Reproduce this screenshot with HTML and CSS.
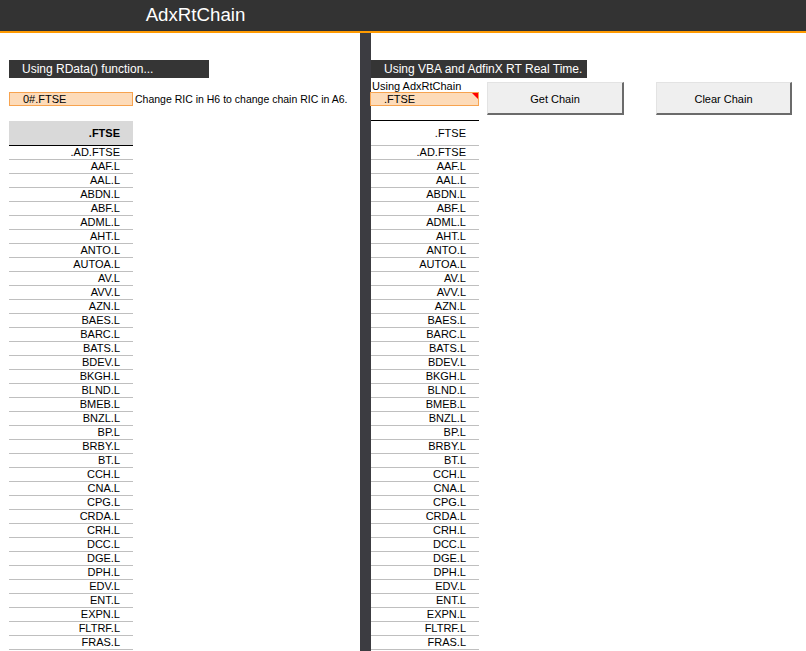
FILE: index.html
```html
<!DOCTYPE html>
<html>
<head>
<meta charset="utf-8">
<link rel="stylesheet" href="styles.css">
</head>
<body>
<div class="topbar"><div class="title">AdxRtChain</div></div>
<div class="main">
  <div class="leftcol">
    <div class="section section-left">Using RData() function...</div>
    <div class="inputrow">
      <div class="cellinput cellinput-left">0#.FTSE</div>
      <div class="note">Change RIC in H6 to change chain RIC in A6.</div>
    </div>
    <div class="table table-left">
      <div class="thead thead-left">.FTSE</div>
      <div class="rows" id="rowsL"></div>
    </div>
  </div>
  <div class="divider"></div>
  <div class="rightcol">
    <div class="section section-right">Using VBA and AdfinX RT Real Time.</div>
    <div class="controls">
      <div class="stack">
        <div class="label">Using AdxRtChain</div>
        <div class="cellinput cellinput-right">.FTSE<span class="flag"></span></div>
      </div>
      <div class="btn btn-get">Get Chain</div>
      <div class="btn btn-clear">Clear Chain</div>
    </div>
    <div class="table table-right">
      <div class="thead thead-right">.FTSE</div>
      <div class="rows" id="rowsR"></div>
    </div>
  </div>
</div>
<script>
var items = [".AD.FTSE","AAF.L","AAL.L","ABDN.L","ABF.L","ADML.L","AHT.L","ANTO.L","AUTOA.L","AV.L","AVV.L","AZN.L","BAES.L","BARC.L","BATS.L","BDEV.L","BKGH.L","BLND.L","BMEB.L","BNZL.L","BP.L","BRBY.L","BT.L","CCH.L","CNA.L","CPG.L","CRDA.L","CRH.L","DCC.L","DGE.L","DPH.L","EDV.L","ENT.L","EXPN.L","FLTRF.L","FRAS.L"];
["rowsL","rowsR"].forEach(function(id){
  var el = document.getElementById(id);
  items.forEach(function(t){
    var d = document.createElement("div");
    d.className = "row";
    d.textContent = t;
    el.appendChild(d);
  });
});
</script>
</body>
</html>
```
FILE: styles.css
```css
html, body {
  margin: 0;
  padding: 0;
  background: #ffffff;
  font-family: "Liberation Sans", Arial, sans-serif;
  overflow: hidden;
  height: 651px;
}
.topbar {
  height: 31px;
  background: #333333;
  border-bottom: 2px solid #ff9a00;
  box-sizing: content-box;
}
.title {
  width: 391px;
  text-align: center;
  color: #ffffff;
  font-size: 18.7px;
  line-height: 30px;
}
.main {
  display: flex;
  height: 618px;
}
.leftcol {
  width: 351px;
  padding-left: 9px;
}
.divider {
  width: 11px;
  background: #3c3c41;
  flex: none;
}
.rightcol {
  flex: 1;
}
.section {
  margin-top: 27px;
  height: 18px;
  background: #353535;
  color: #ffffff;
  font-size: 12px;
  line-height: 19px;
  padding-left: 13px;
  box-sizing: border-box;
}
.section-left {
  width: 200px;
}
.section-right {
  width: 216px;
}
.inputrow {
  display: flex;
  align-items: center;
  margin-top: 14px;
  height: 14px;
}
.cellinput {
  position: relative;
  height: 14px;
  background: #fddbb9;
  border: 1px solid #f7a34f;
  box-sizing: border-box;
  font-size: 11px;
  line-height: 12px;
  color: #000000;
  padding-left: 13px;
}
.cellinput-left {
  width: 124px;
}
.note {
  font-size: 10.5px;
  margin-left: 2px;
  color: #000000;
  line-height: 14px;
  white-space: nowrap;
}
.table {
  margin-top: 15px;
}
.table-left {
  width: 124px;
}
.thead {
  height: 25px;
  box-sizing: border-box;
  font-size: 11px;
  text-align: right;
  padding-right: 13px;
  line-height: 24px;
}
.thead-left {
  background: #d9d9d9;
  font-weight: bold;
  border-bottom: 1px solid #000000;
}
.row {
  height: 14px;
  box-sizing: border-box;
  border-bottom: 1px solid #bfbfbf;
  font-size: 11px;
  line-height: 13px;
  text-align: right;
  padding-right: 13px;
  color: #000000;
}
.controls {
  display: flex;
  align-items: flex-start;
  height: 42px;
}
.stack {
  width: 109px;
}
.label {
  height: 14px;
  font-size: 11px;
  line-height: 16px;
  padding-left: 1px;
  color: #000000;
}
.cellinput-right {
  width: 109px;
  margin-left: -1px;
}
.flag {
  position: absolute;
  top: 0;
  right: 0;
  width: 0;
  height: 0;
  border-top: 6px solid #ff0000;
  border-left: 6px solid transparent;
}
.btn {
  margin-top: 4px;
  height: 33px;
  box-sizing: border-box;
  background: #efefef;
  border-top: 1px solid #e3e3e3;
  border-left: 1px solid #e3e3e3;
  border-right: 2px solid #6b6b6b;
  border-bottom: 2px solid #6b6b6b;
  font-size: 11px;
  text-align: center;
  line-height: 32px;
  color: #000000;
}
.btn-get {
  width: 137px;
  margin-left: 7px;
}
.btn-clear {
  width: 136px;
  margin-left: 32px;
}
.table-right {
  margin-top: 0;
  width: 108px;
  border-top: 1px solid #000000;
}
.thead-right {
  height: 25px;
  background: #ffffff;
  border-bottom: 1px solid #bfbfbf;
  line-height: 24px;
}
```
